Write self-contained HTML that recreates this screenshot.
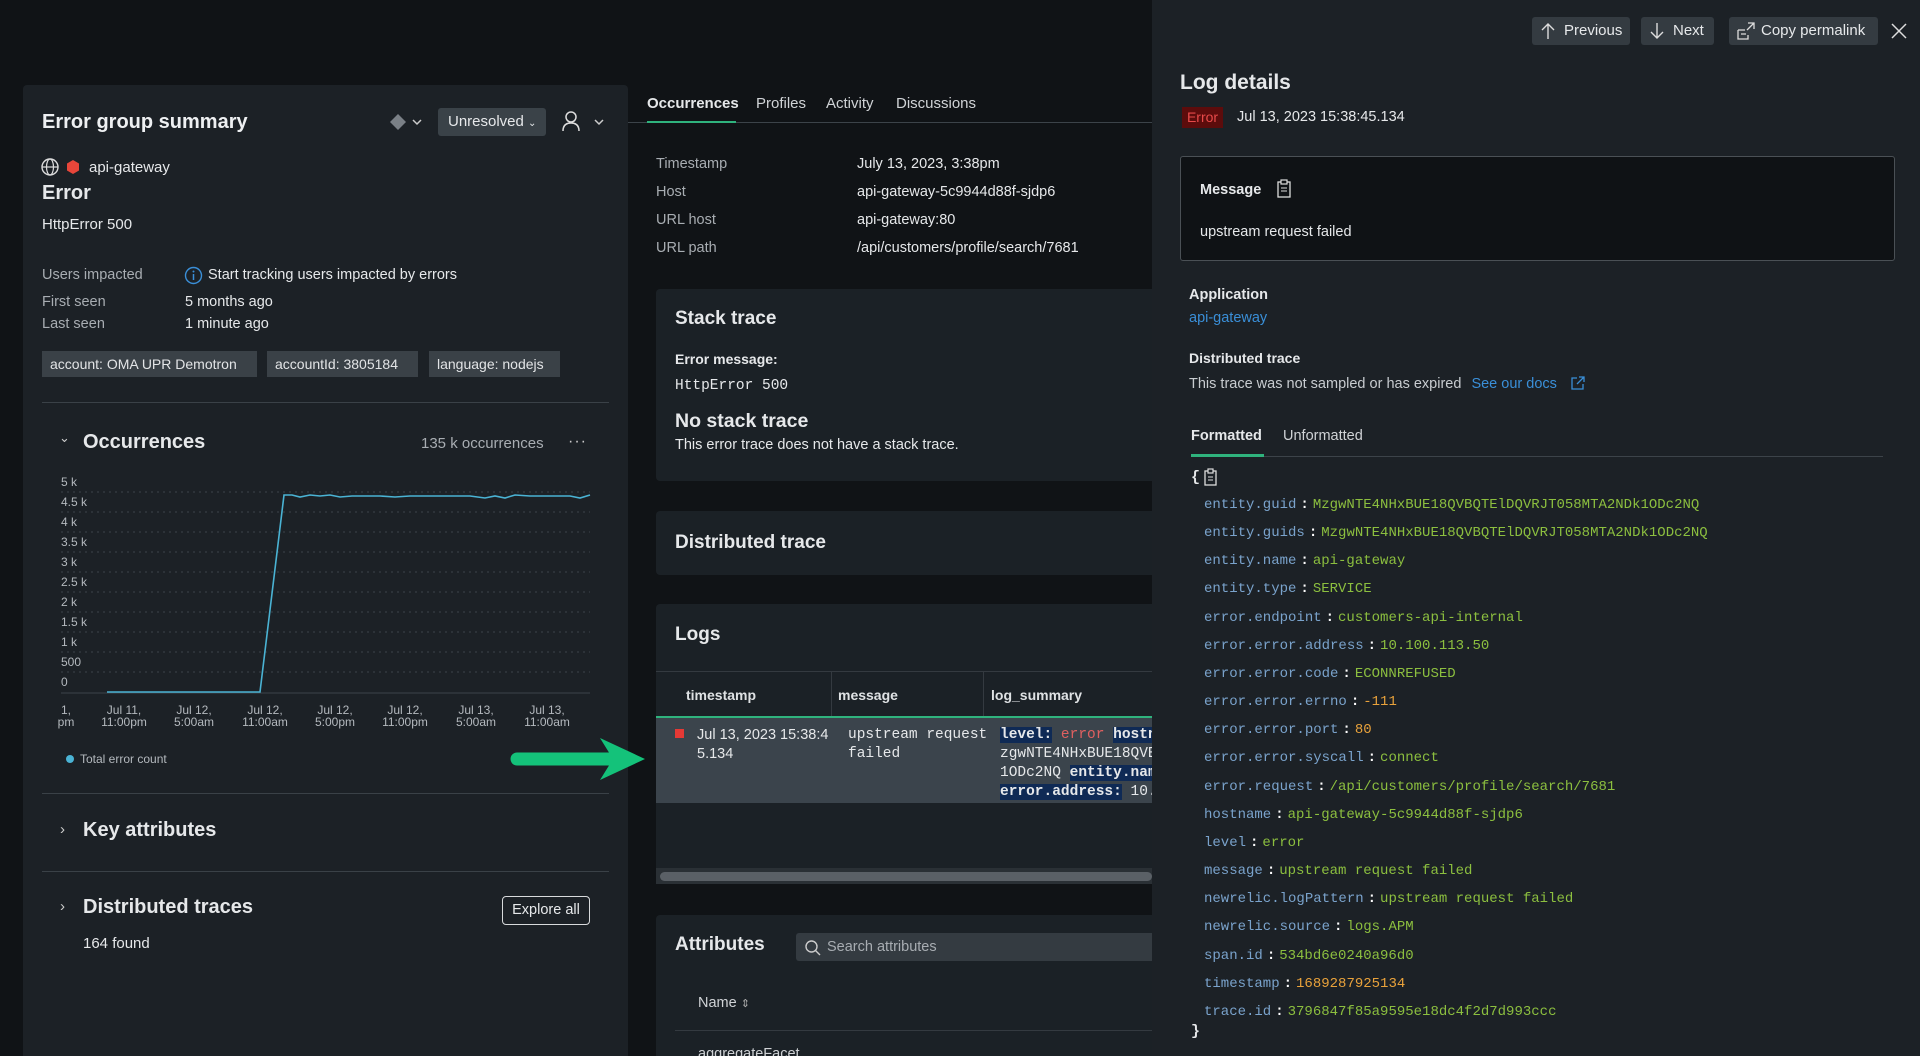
<!DOCTYPE html>
<html><head><meta charset="utf-8">
<style>
*{margin:0;padding:0;box-sizing:border-box}
html,body{width:1920px;height:1056px;overflow:hidden}
body{background:#101316;font-family:"Liberation Sans",sans-serif;color:#e6e8ea;position:relative}
.a{position:absolute;white-space:nowrap}
.lp{position:absolute;left:23px;top:85px;width:605px;height:971px;background:#1c2126;border-radius:4px 4px 0 0}
.mono{font-family:"Liberation Mono",monospace}
.tag{position:absolute;top:351px;height:26px;background:#3a4147;color:#e2e4e6;font-size:14px;line-height:26px;padding:0 8px;white-space:nowrap;overflow:hidden}
.lbl{color:#a8adb2;font-size:14.5px}
.val{color:#e6e8ea;font-size:14.5px}
.card{position:absolute;left:656px;width:496px;background:#1b2126;border-radius:4px 0 0 4px}
.btn{position:absolute;top:17px;height:28px;background:#343b41;border-radius:3px;font-size:15px;line-height:28px;color:#e6e8ea;padding-left:32px;white-space:nowrap}
.k{color:#7aa3cc}.g{color:#8cbf3f}.o{color:#e9a23b}.c{color:#fff;margin:0 4px 0 4px;font-weight:bold}
.jr{position:absolute;left:1204px;font-family:"Liberation Mono",monospace;font-size:14px;white-space:nowrap}
</style></head><body>

<!-- left panel -->
<div class="lp"></div>
<div class="a" style="left:42px;top:111px;font-size:20px;font-weight:bold;color:#eef0f2">Error group summary</div>
<svg class="a" style="left:389px;top:112px" width="40" height="20"><path d="M9 2 L17 10 L9 18 L1 10Z" fill="#7a8086"/><path d="M24 8 l4 4 l4 -4" stroke="#ccc" stroke-width="1.5" fill="none"/></svg>
<div class="a" style="left:438px;top:108px;width:108px;height:28px;background:#3a4248;border-radius:3px;font-size:15px;line-height:28px;padding-left:10px;color:#e6e8ea">Unresolved <span style="font-size:10px">&#8964;</span></div>
<svg class="a" style="left:560px;top:110px" width="50" height="24"><circle cx="11" cy="7" r="5" stroke="#ddd" stroke-width="1.5" fill="none"/><path d="M3 21 q0 -8 8 -8 q8 0 8 8" stroke="#ddd" stroke-width="1.5" fill="none"/><path d="M35 10 l4 4 l4 -4" stroke="#ccc" stroke-width="1.5" fill="none"/></svg>
<svg class="a" style="left:41px;top:158px" width="44" height="18"><circle cx="9" cy="9" r="8" stroke="#ddd" stroke-width="1.4" fill="none"/><ellipse cx="9" cy="9" rx="3.5" ry="8" stroke="#ddd" stroke-width="1.2" fill="none"/><path d="M1 9 H17" stroke="#ddd" stroke-width="1.2"/><path d="M32 2 L38 5.5 L38 12.5 L32 16 L26 12.5 L26 5.5Z" fill="#e8463a"/></svg>
<div class="a" style="left:89px;top:159px;font-size:15px">api-gateway</div>
<div class="a" style="left:42px;top:182px;font-size:20px;font-weight:bold">Error</div>
<div class="a" style="left:42px;top:216px;font-size:15px">HttpError 500</div>
<div class="a lbl" style="left:42px;top:267px">Users impacted</div>
<svg class="a" style="left:184px;top:266px" width="19" height="19"><circle cx="9.5" cy="9.5" r="8" stroke="#3a8fd8" stroke-width="1.4" fill="none"/><path d="M9.5 8 V14" stroke="#3a8fd8" stroke-width="1.5"/><circle cx="9.5" cy="5.5" r="1" fill="#3a8fd8"/></svg>
<div class="a val" style="left:208px;top:267px">Start tracking users impacted by errors</div>
<div class="a lbl" style="left:42px;top:294px">First seen</div>
<div class="a val" style="left:185px;top:294px">5 months ago</div>
<div class="a lbl" style="left:42px;top:316px">Last seen</div>
<div class="a val" style="left:185px;top:316px">1 minute ago</div>
<div class="tag" style="left:42px;width:215px">account: OMA UPR Demotron</div>
<div class="tag" style="left:267px;width:151px">accountId: 3805184</div>
<div class="tag" style="left:429px;width:131px">language: nodejs</div>
<div class="a" style="left:42px;top:402px;width:567px;height:1px;background:#3a4147"></div>
<div class="a" style="left:59px;top:430px;font-size:13px;color:#ccc">&#8964;</div>
<div class="a" style="left:83px;top:431px;font-size:20px;font-weight:bold">Occurrences</div>
<div class="a" style="left:421px;top:435px;font-size:15px;color:#a8adb2">135 k occurrences</div>
<div class="a" style="left:568px;top:433px;font-size:16px;color:#ccc;letter-spacing:1px">···</div>
<svg class="a" style="left:0;top:470px" width="640" height="300" font-family="Liberation Sans" font-size="12" fill="#b4b9be">
<g stroke="#3c4349" stroke-dasharray="2 4">
<line x1="61" x2="590" y1="22" y2="22"/><line x1="61" x2="590" y1="42" y2="42"/><line x1="61" x2="590" y1="62" y2="62"/><line x1="61" x2="590" y1="82" y2="82"/><line x1="61" x2="590" y1="102" y2="102"/><line x1="61" x2="590" y1="122" y2="122"/><line x1="61" x2="590" y1="142" y2="142"/><line x1="61" x2="590" y1="162" y2="162"/><line x1="61" x2="590" y1="182" y2="182"/><line x1="61" x2="590" y1="202" y2="202"/></g>
<line x1="61" x2="590" y1="223" y2="223" stroke="#3c4349"/>
<text x="61" y="16">5 k</text><text x="61" y="36">4.5 k</text><text x="61" y="56">4 k</text><text x="61" y="76">3.5 k</text><text x="61" y="96">3 k</text><text x="61" y="116">2.5 k</text><text x="61" y="136">2 k</text><text x="61" y="156">1.5 k</text><text x="61" y="176">1 k</text><text x="61" y="196">500</text><text x="61" y="216">0</text>
<polyline fill="none" stroke="#4ab3d4" stroke-width="1.6" points="107,222 260,222 284,25 292,25 300,27 310,25 320,26 330,25 340,27 352,26 365,26 380,26 395,27 410,26 430,26 450,26 470,26 485,28 495,26 505,28 515,25 530,26 550,26 570,26 580,28 590,25"/>
<g text-anchor="middle"><text x="66" y="244">1,</text><text x="66" y="256">pm</text>
<text x="124" y="244">Jul 11,</text><text x="124" y="256">11:00pm</text>
<text x="194" y="244">Jul 12,</text><text x="194" y="256">5:00am</text>
<text x="265" y="244">Jul 12,</text><text x="265" y="256">11:00am</text>
<text x="335" y="244">Jul 12,</text><text x="335" y="256">5:00pm</text>
<text x="405" y="244">Jul 12,</text><text x="405" y="256">11:00pm</text>
<text x="476" y="244">Jul 13,</text><text x="476" y="256">5:00am</text>
<text x="547" y="244">Jul 13,</text><text x="547" y="256">11:00am</text></g>
<circle cx="70" cy="289" r="4" fill="#4ab3d4"/><text x="80" y="293" font-size="12">Total error count</text>
</svg>
<div class="a" style="left:42px;top:793px;width:567px;height:1px;background:#3a4147"></div>
<div class="a" style="left:60px;top:821px;font-size:15px;color:#ccc">›</div>
<div class="a" style="left:83px;top:819px;font-size:20px;font-weight:bold">Key attributes</div>
<div class="a" style="left:42px;top:871px;width:567px;height:1px;background:#3a4147"></div>
<div class="a" style="left:60px;top:898px;font-size:15px;color:#ccc">›</div>
<div class="a" style="left:83px;top:896px;font-size:20px;font-weight:bold">Distributed traces</div>
<div class="a" style="left:502px;top:896px;width:88px;height:29px;border:1px solid #d8dadc;border-radius:4px;font-size:14.5px;line-height:27px;text-align:center">Explore all</div>
<div class="a" style="left:83px;top:935px;font-size:15px">164 found</div>

<!-- arrow -->
<svg class="a" style="left:505px;top:734px" width="145" height="50"><path d="M12 25 H105" stroke="#14c27a" stroke-width="13" stroke-linecap="round"/><path d="M95 4 L140 25 L95 46 L108 25Z" fill="#14c27a"/></svg>

<!-- middle -->
<div class="a" style="left:628px;top:122px;width:524px;height:1px;background:#3c4349"></div>
<div class="a" style="left:647px;top:95px;font-size:15px;font-weight:bold">Occurrences</div>
<div class="a" style="left:647px;top:121px;width:89px;height:2px;background:#2fb37d"></div>
<div class="a" style="left:756px;top:95px;font-size:15px;color:#d0d3d6">Profiles</div>
<div class="a" style="left:826px;top:95px;font-size:15px;color:#d0d3d6">Activity</div>
<div class="a" style="left:896px;top:95px;font-size:15px;color:#d0d3d6">Discussions</div>
<div class="a lbl" style="left:656px;top:156px">Timestamp</div><div class="a val" style="left:857px;top:156px">July 13, 2023, 3:38pm</div>
<div class="a lbl" style="left:656px;top:184px">Host</div><div class="a val" style="left:857px;top:184px">api-gateway-5c9944d88f-sjdp6</div>
<div class="a lbl" style="left:656px;top:212px">URL host</div><div class="a val" style="left:857px;top:212px">api-gateway:80</div>
<div class="a lbl" style="left:656px;top:240px">URL path</div><div class="a val" style="left:857px;top:240px">/api/customers/profile/search/7681</div>

<div class="card" style="top:289px;height:192px"></div>
<div class="a" style="left:675px;top:308px;font-size:19px;font-weight:bold">Stack trace</div>
<div class="a" style="left:675px;top:351px;font-size:14px;font-weight:bold">Error message:</div>
<div class="a mono" style="left:675px;top:378px;font-size:14.5px">HttpError 500</div>
<div class="a" style="left:675px;top:410px;font-size:19.5px;font-weight:bold">No stack trace</div>
<div class="a" style="left:675px;top:437px;font-size:14.5px">This error trace does not have a stack trace.</div>
<div class="card" style="top:511px;height:64px"></div>
<div class="a" style="left:675px;top:532px;font-size:19px;font-weight:bold">Distributed trace</div>
<div class="card" style="top:604px;height:280px"></div>
<div class="a" style="left:675px;top:624px;font-size:19px;font-weight:bold">Logs</div>
<div class="a" style="left:656px;top:671px;width:496px;height:1px;background:#343a40"></div>
<div class="a" style="left:831px;top:672px;width:1px;height:45px;background:#343a40"></div>
<div class="a" style="left:983px;top:672px;width:1px;height:45px;background:#343a40"></div>
<div class="a" style="left:686px;top:687px;font-size:14px;font-weight:bold;color:#dfe2e4">timestamp</div>
<div class="a" style="left:838px;top:687px;font-size:14px;font-weight:bold;color:#dfe2e4">message</div>
<div class="a" style="left:991px;top:687px;font-size:14px;font-weight:bold;color:#dfe2e4">log_summary</div>
<div class="a" style="left:656px;top:716px;width:496px;height:2px;background:#2fb37d"></div>
<div class="a" style="left:656px;top:718px;width:496px;height:85px;background:#3b444c"></div>
<div class="a" style="left:675px;top:729px;width:9px;height:9px;background:#e53935"></div>
<div class="a" style="left:697px;top:726px;font-size:14.5px;line-height:19px">Jul 13, 2023 15:38:4<br>5.134</div>
<div class="a mono" style="left:848px;top:726px;font-size:14.5px;line-height:19px">upstream request<br>failed</div>
<div class="a mono" style="left:1000px;top:726px;font-size:14.5px;line-height:19px;width:152px;overflow:hidden"><b style="background:#0f2a55">level:</b> <span style="color:#e06060">error</span> <b style="background:#0f2a55">hostn</b><br>zgwNTE4NHxBUE18QVB<br>1ODc2NQ <b style="background:#0f2a55">entity.nam</b><br><b style="background:#0f2a55">error.address:</b> 10.</div>
<div class="a" style="left:656px;top:868px;width:496px;height:16px;background:#2a3035"></div>
<div class="a" style="left:660px;top:872px;width:492px;height:9px;background:#5a6066;border-radius:5px"></div>
<div class="card" style="top:915px;height:141px;border-radius:4px 0 0 0"></div>
<div class="a" style="left:675px;top:934px;font-size:19px;font-weight:bold">Attributes</div>
<div class="a" style="left:796px;top:933px;width:356px;height:28px;background:#343b41;border-radius:3px 0 0 3px"></div>
<svg class="a" style="left:804px;top:939px" width="18" height="18"><circle cx="7.5" cy="7.5" r="5.5" stroke="#ccc" stroke-width="1.4" fill="none"/><path d="M11.5 11.5 L16 16" stroke="#ccc" stroke-width="1.4"/></svg>
<div class="a" style="left:827px;top:939px;font-size:14.5px;color:#a8adb2">Search attributes</div>
<div class="a" style="left:698px;top:995px;font-size:14.5px;color:#d0d3d6">Name <span style="font-size:11px;color:#aaa">&#8661;</span></div>
<div class="a" style="left:675px;top:1030px;width:477px;height:1px;background:#343a40"></div>
<div class="a" style="left:698px;top:1046px;font-size:14.5px;color:#d0d3d6">aggregateFacet</div>

<!-- right panel -->
<div class="a" style="left:1152px;top:0;width:768px;height:1056px;background:#1c2126"></div>
<div class="btn" style="left:1532px;width:98px">Previous</div>
<svg class="a" style="left:1540px;top:22px" width="16" height="18"><path d="M8 17 V2 M2 8 L8 2 L14 8" stroke="#ddd" stroke-width="1.4" fill="none"/></svg>
<div class="btn" style="left:1641px;width:73px">Next</div>
<svg class="a" style="left:1649px;top:22px" width="16" height="18"><path d="M8 1 V16 M2 10 L8 16 L14 10" stroke="#ddd" stroke-width="1.4" fill="none"/></svg>
<div class="btn" style="left:1729px;width:149px;padding-left:32px">Copy permalink</div>
<svg class="a" style="left:1736px;top:21px" width="20" height="20"><path d="M2 9 H9 M2 9 V18 H12 V14 M5 13 H10 M12 2 H18 V8 M18 2 L11 9" stroke="#ddd" stroke-width="1.3" fill="none"/></svg>
<svg class="a" style="left:1891px;top:23px" width="16" height="16"><path d="M1 1 L15 15 M15 1 L1 15" stroke="#ddd" stroke-width="1.5"/></svg>
<div class="a" style="left:1180px;top:71px;font-size:21px;font-weight:bold">Log details</div>
<div class="a" style="left:1182px;top:107px;height:21px;width:41px;background:#5c0c0c;color:#e84a4a;font-size:14px;line-height:21px;text-align:center">Error</div>
<div class="a" style="left:1237px;top:109px;font-size:14.5px">Jul 13, 2023 15:38:45.134</div>
<div class="a" style="left:1180px;top:156px;width:715px;height:105px;background:#0f1215;border:1px solid #4a5055;border-radius:3px"></div>
<div class="a" style="left:1200px;top:182px;font-size:14.5px;font-weight:bold">Message</div>
<svg class="a" style="left:1276px;top:179px" width="16" height="20"><rect x="2" y="3" width="12" height="15" stroke="#ddd" stroke-width="1.3" fill="none"/><rect x="5" y="1" width="6" height="4" stroke="#ddd" stroke-width="1.2" fill="#0f1215"/><path d="M5 9 H11 M5 12 H11" stroke="#ddd" stroke-width="1.1"/></svg>
<div class="a" style="left:1200px;top:224px;font-size:14.5px">upstream request failed</div>
<div class="a" style="left:1189px;top:287px;font-size:14.5px;font-weight:bold">Application</div>
<div class="a" style="left:1189px;top:310px;font-size:14.5px;color:#3a8fd8">api-gateway</div>
<div class="a" style="left:1189px;top:350px;font-size:14px;font-weight:bold">Distributed trace</div>
<div class="a" style="left:1189px;top:376px;font-size:14.5px;color:#c8ccd0">This trace was not sampled or has expired <span style="color:#3a8fd8;margin-left:6px">See our docs</span></div>
<svg class="a" style="left:1570px;top:375px" width="16" height="16"><path d="M7 3 H2 V14 H13 V9 M9 2 H14 V7 M14 2 L7 9" stroke="#3a8fd8" stroke-width="1.3" fill="none"/></svg>
<div class="a" style="left:1191px;top:428px;font-size:14.5px;font-weight:bold">Formatted</div>
<div class="a" style="left:1283px;top:428px;font-size:14.5px;color:#d0d3d6">Unformatted</div>
<div class="a" style="left:1191px;top:456px;width:692px;height:1px;background:#3c4349"></div>
<div class="a" style="left:1191px;top:454px;width:73px;height:3px;background:#2fb37d"></div>
<div class="a mono" style="left:1191px;top:469px;font-size:15px;font-weight:bold">{</div>
<svg class="a" style="left:1203px;top:468px" width="16" height="19"><rect x="2" y="3" width="11" height="14" stroke="#ddd" stroke-width="1.3" fill="none"/><rect x="5" y="1" width="5" height="4" stroke="#ddd" stroke-width="1.2" fill="#1c2126"/><path d="M5 9 H10 M5 12 H10" stroke="#ddd" stroke-width="1.1"/></svg>
<div class="jr" style="top:497px"><span class="k">entity.guid</span><span class="c">:</span><span class="g">MzgwNTE4NHxBUE18QVBQTElDQVRJT058MTA2NDk1ODc2NQ</span></div>
<div class="jr" style="top:525px"><span class="k">entity.guids</span><span class="c">:</span><span class="g">MzgwNTE4NHxBUE18QVBQTElDQVRJT058MTA2NDk1ODc2NQ</span></div>
<div class="jr" style="top:553px"><span class="k">entity.name</span><span class="c">:</span><span class="g">api-gateway</span></div>
<div class="jr" style="top:581px"><span class="k">entity.type</span><span class="c">:</span><span class="g">SERVICE</span></div>
<div class="jr" style="top:610px"><span class="k">error.endpoint</span><span class="c">:</span><span class="g">customers-api-internal</span></div>
<div class="jr" style="top:638px"><span class="k">error.error.address</span><span class="c">:</span><span class="g">10.100.113.50</span></div>
<div class="jr" style="top:666px"><span class="k">error.error.code</span><span class="c">:</span><span class="g">ECONNREFUSED</span></div>
<div class="jr" style="top:694px"><span class="k">error.error.errno</span><span class="c">:</span><span class="o">-111</span></div>
<div class="jr" style="top:722px"><span class="k">error.error.port</span><span class="c">:</span><span class="o">80</span></div>
<div class="jr" style="top:750px"><span class="k">error.error.syscall</span><span class="c">:</span><span class="g">connect</span></div>
<div class="jr" style="top:779px"><span class="k">error.request</span><span class="c">:</span><span class="g">/api/customers/profile/search/7681</span></div>
<div class="jr" style="top:807px"><span class="k">hostname</span><span class="c">:</span><span class="g">api-gateway-5c9944d88f-sjdp6</span></div>
<div class="jr" style="top:835px"><span class="k">level</span><span class="c">:</span><span class="g">error</span></div>
<div class="jr" style="top:863px"><span class="k">message</span><span class="c">:</span><span class="g">upstream request failed</span></div>
<div class="jr" style="top:891px"><span class="k">newrelic.logPattern</span><span class="c">:</span><span class="g">upstream request failed</span></div>
<div class="jr" style="top:919px"><span class="k">newrelic.source</span><span class="c">:</span><span class="g">logs.APM</span></div>
<div class="jr" style="top:948px"><span class="k">span.id</span><span class="c">:</span><span class="g">534bd6e0240a96d0</span></div>
<div class="jr" style="top:976px"><span class="k">timestamp</span><span class="c">:</span><span class="o">1689287925134</span></div>
<div class="jr" style="top:1004px"><span class="k">trace.id</span><span class="c">:</span><span class="g">3796847f85a9595e18dc4f2d7d993ccc</span></div>
<div class="a mono" style="left:1191px;top:1023px;font-size:15px;font-weight:bold">}</div>
</body></html>
